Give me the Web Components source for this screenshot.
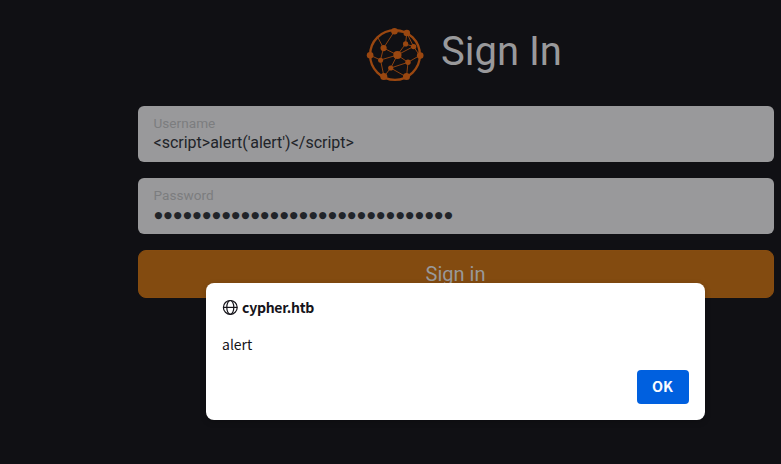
<!DOCTYPE html>
<html lang="en"><head><meta charset="utf-8"><title>Sign In</title>
<style>html,body{margin:0;height:100%;overflow:hidden;background:#101014}body{font-family:Roboto,sans-serif}</style></head>
<body>
<login-page></login-page>
<script>
class Base extends HTMLElement{
  constructor(){super();this.attachShadow({mode:'open'}).innerHTML=this.constructor.markup;}
}
customElements.define('graph-logo',class extends Base{static markup=`
<style>:host{display:block;width:60px;height:60px}svg{display:block}</style>
<svg width="60" height="60" viewBox="365 25 60 60" fill="#9a4710" stroke="#9a4710">
<circle cx="395" cy="55" r="24.9" fill="none" stroke-width="2.3"/>
<path fill="none" stroke-width=".9" d="M394.5 31.2 383.5 48 380.5 60 370 55.2M383.5 48 397.3 55 380.5 60 384 76.5M383.5 48 377.5 37M394.5 31.2 406.8 33 405.5 44 413.5 46.5 406.8 33M405.5 44 397.3 55 413.5 46.5 419.7 55.5 408 62.3 397.3 55 390.7 68 408 62.3 406.5 77 390.7 68 384 76.5"/>
<g stroke="none"><circle cx="397.4" cy="55" r="4.1"/><circle cx="394.5" cy="31.2" r="3.3"/><circle cx="406.8" cy="33" r="3.3"/><circle cx="370.1" cy="55.3" r="3.3"/><circle cx="420.2" cy="55.6" r="3.3"/><circle cx="383.8" cy="76.5" r="3.5"/><circle cx="406.5" cy="76.6" r="3.5"/><circle cx="383.6" cy="48.1" r="3.1"/><circle cx="405.6" cy="43.9" r="2.6"/><circle cx="413.6" cy="46.6" r="2.7"/><circle cx="380.6" cy="60.2" r="2.5"/><circle cx="408" cy="62.3" r="2.7"/><circle cx="390.7" cy="68" r="2.6"/></g></svg>`});
customElements.define('text-field',class extends Base{static markup=`
<style>:host{display:block;box-sizing:border-box;height:56px;padding:9px 15.5px 0;border-radius:6px;background:#99999b;color:#212429;font-size:16px;line-height:24px}
.label{font-size:13.6px;line-height:16px;color:#7c7d7f;letter-spacing:.02px}
.value{white-space:nowrap}:host([secret]) .value{font:9.4px/24px "DejaVu Sans",sans-serif;letter-spacing:1.49px;padding-left:.7px}</style>
<div class="label"><slot name="label"></slot></div><div class="value"><slot></slot></div>`});
customElements.define('submit-button',class extends Base{static markup=`
<style>:host{display:flex;box-sizing:border-box;height:48px;justify-content:center;align-items:center;border-radius:8px;border:1px solid #864c10;background:#834b10;color:#99999b;font-size:20px;line-height:30px;padding-right:1px}</style><slot></slot>`});
customElements.define('alert-dialog',class extends Base{static markup=`
<style>:host{display:flex;flex-direction:column;box-sizing:border-box;width:499px;height:137px;padding:16px;border-radius:8px;background:#fff;color:#15141a;font:14px/18px "Noto Sans CJK SC",sans-serif;box-shadow:0 2px 6px #0003}
header{display:flex;align-items:center;gap:4px;height:16px;font-weight:700;letter-spacing:-.28px}
main{padding-top:20px}svg{display:block}
button{align-self:flex-end;margin-top:auto;width:52px;height:34px;padding:0 1px 2px 0;border:0;border-radius:4px;background:#0060df;color:#fbfbfe;font:700 14.4px/20px "Noto Sans CJK SC",sans-serif}</style>
<header><svg width="16" height="16" viewBox="0 0 16 16" fill="none" stroke="#15141a" stroke-width="1.2"><circle cx="8.3" cy="8.4" r="6.9"/><ellipse cx="8.3" cy="8.4" rx="3.5" ry="6.9"/><path d="M1.4 8.4h13.8"/></svg><slot name="origin"></slot></header><main><slot></slot></main><button>OK</button>`});
customElements.define('login-page',class extends Base{static markup=`
<style>:host{display:block;position:relative;width:781px;height:464px;background:#101014}
.form{display:flex;flex-direction:column;gap:16px;width:636px;margin-left:138px}
.head{display:flex;align-items:flex-start;box-sizing:border-box;height:90px;padding:25px 0 0 227px;gap:16px}
h1{margin:0;color:#99999b;font-weight:400;font-size:40px;line-height:54px;white-space:nowrap}
alert-dialog{position:absolute;left:206px;top:283px}</style>
<div class="form"><div class="head"><graph-logo></graph-logo><h1>Sign In</h1></div>
<text-field><span slot="label">Username</span>&lt;script&gt;alert('alert')&lt;/script&gt;</text-field>
<text-field secret><span slot="label">Password</span>●●●●●●●●●●●●●●●●●●●●●●●●●●●●●●●</text-field>
<submit-button>Sign in</submit-button></div>
<alert-dialog><span slot="origin">cypher.htb</span>alert</alert-dialog>`});
</script></body></html>
